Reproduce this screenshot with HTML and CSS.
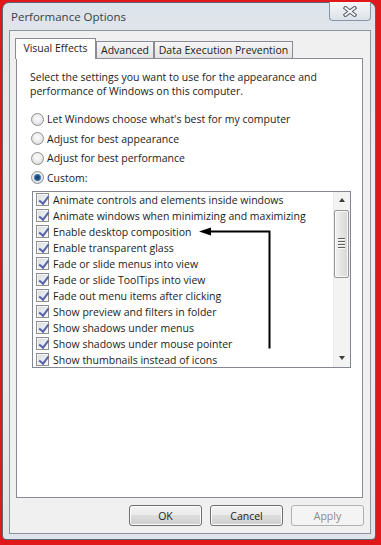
FILE: index.html
```html
<!DOCTYPE html>
<html lang="en">
<head>
    <meta charset="UTF-8">
    <meta name="viewport" content="width=device-width, initial-scale=1.0">
    <title>Performance Options</title>
    <link rel="stylesheet" href="styles.css">
</head>
<body>
    <div class="window">
        <div class="titlebar">
            <span class="title">Performance Options</span>
            <button class="close" aria-label="Close">
                <svg width="14" height="11" viewBox="0 0 14 11">
                    <path d="M2.5 2 L11.5 9 M11.5 2 L2.5 9" stroke="#5c636c" stroke-width="4" stroke-linecap="square"/>
                    <path d="M2.5 2 L11.5 9 M11.5 2 L2.5 9" stroke="#f6f7f8" stroke-width="1.8" stroke-linecap="square"/>
                </svg>
            </button>
        </div>

        <div class="client">
            <div class="tabs">
                <div class="tab tab-active">Visual Effects</div>
                <div class="tab tab-advanced">Advanced</div>
                <div class="tab tab-dep">Data Execution Prevention</div>
            </div>

            <div class="panel">
                <p class="intro">Select the settings you want to use for the appearance and<br>performance of Windows on this computer.</p>

                <ul class="radios">
                    <li><span class="radio"></span>Let Windows choose what's best for my computer</li>
                    <li><span class="radio"></span>Adjust for best appearance</li>
                    <li><span class="radio"></span>Adjust for best performance</li>
                    <li><span class="radio radio-on"></span>Custom:</li>
                </ul>

                <div class="listbox">
                    <ul class="items">
                        <li><span class="check"></span>Animate controls and elements inside windows</li>
                        <li><span class="check"></span>Animate windows when minimizing and maximizing</li>
                        <li><span class="check"></span>Enable desktop composition</li>
                        <li><span class="check"></span>Enable transparent glass</li>
                        <li><span class="check"></span>Fade or slide menus into view</li>
                        <li><span class="check"></span>Fade or slide ToolTips into view</li>
                        <li><span class="check"></span>Fade out menu items after clicking</li>
                        <li><span class="check"></span>Show preview and filters in folder</li>
                        <li><span class="check"></span>Show shadows under menus</li>
                        <li><span class="check"></span>Show shadows under mouse pointer</li>
                        <li><span class="check"></span>Show thumbnails instead of icons</li>
                    </ul>
                    <div class="scrollbar">
                        <div class="sb-btn"><span class="arrow-up"></span></div>
                        <div class="thumb">
                            <span class="grip"></span>
                            <span class="grip"></span>
                            <span class="grip"></span>
                            <span class="grip"></span>
                        </div>
                        <div class="track"></div>
                        <div class="sb-btn"><span class="arrow-down"></span></div>
                    </div>
                </div>
            </div>

            <div class="buttons">
                <button class="btn">OK</button>
                <button class="btn">Cancel</button>
                <button class="btn" disabled>Apply</button>
            </div>
        </div>
    </div>

    <!-- hand drawn annotation over the screenshot -->
    <svg class="annotation" width="381" height="545" viewBox="0 0 381 545">
        <path d="M209 231.5 H269.5 V348.5" fill="none" stroke="#000" stroke-width="2"/>
        <polygon points="199,231.5 211,227.5 211,235.5" fill="#000"/>
    </svg>
</body>
</html>
```

FILE: styles.css
```css
* {
    box-sizing: border-box;
}
body {
    margin: 0;
    height: 545px;
    overflow: hidden;
    position: relative;
    background: #e1181b;
    font-family: "Open Sans", "Noto Sans", Arial, sans-serif;
    font-size: 10.5px;
    color: #1c1c1c;
}
ul {
    list-style: none;
    margin: 0;
    padding: 0;
}
.window {
    margin: 2px 5px 0 2px;
    height: 538px;
    display: flex;
    flex-direction: column;
    padding: 0 4px 5px 6px;
    border: 1px solid #5e6670;
    border-radius: 7px 7px 4px 4px;
    background: linear-gradient(180deg, #dde3ea 0%, #e9edf1 30%, #e7ebef 70%, #dfe4ea 100%);
}
.titlebar {
    height: 27px;
    display: flex;
    justify-content: space-between;
    align-items: flex-start;
}
.title {
    padding: 6px 0 0 2px;
    font-size: 11.5px;
    line-height: 16px;
    color: #3b4047;
}
.close {
    width: 42px;
    height: 19px;
    margin-top: -1px;
    padding: 0;
    border: 1px solid #8a95a3;
    border-top: none;
    border-radius: 0 0 4px 4px;
    background: linear-gradient(#f5f7f9, #dde2e8);
    display: flex;
    align-items: center;
    justify-content: center;
}
.client {
    flex: 1;
    border: 1px solid #8d949c;
    background: #f0f0f0;
    padding: 7px 7px 0 6px;
    display: flex;
    flex-direction: column;
}
.tabs {
    display: flex;
    align-items: flex-start;
    height: 21px;
    margin-bottom: -1px;
    position: relative;
    z-index: 1;
}
.tab {
    height: 17px;
    margin-top: 3px;
    border: 1px solid #898c95;
    border-bottom: none;
    background: linear-gradient(#f5f5f5, #e3e3e3);
    line-height: 16px;
    text-align: center;
    white-space: nowrap;
}
.tab-active {
    width: 81px;
    height: 21px;
    margin-top: 0;
    margin-left: -1px;
    background: #fff;
    line-height: 19px;
}
.tab-advanced {
    width: 58px;
}
.tab-dep {
    width: 139px;
}
.panel {
    width: 347px;
    height: 440px;
    border: 1px solid #898c95;
    background: #fff;
    padding: 11px 13px 0;
}
.intro {
    margin: 0;
    line-height: 14px;
}
.radios {
    margin-top: 11.5px;
}
.radios li {
    height: 19.5px;
    display: flex;
    align-items: center;
    gap: 3px;
    padding-left: 1px;
}
.radio {
    width: 13px;
    height: 13px;
    flex: none;
    border-radius: 50%;
    border: 1px solid #8c8f92;
    background: radial-gradient(circle at 50% 40%, #fdfdfd 0, #ebebeb 50%, #cdcfd1 100%);
}
.radio-on {
    background:
        radial-gradient(circle at 50% 50%, #163a66 0, #1f4f86 2px, #5590c9 3.4px, rgba(255, 255, 255, 0) 4px),
        radial-gradient(circle at 50% 40%, #fdfdfd 0, #ebebeb 50%, #cdcfd1 100%);
}
.listbox {
    margin: 3px 0 0 2px;
    width: 319px;
    height: 177px;
    border: 1px solid #828790;
    display: flex;
}
.items {
    flex: 1;
    overflow: hidden;
}
.items li {
    height: 16px;
    display: flex;
    align-items: center;
    gap: 4px;
    padding-left: 3px;
    white-space: nowrap;
}
.check {
    width: 13px;
    height: 13px;
    flex: none;
    position: relative;
    border: 1px solid #8e8f8f;
    background: linear-gradient(135deg, #d9dbde, #f9f9f9);
    box-shadow: inset 0 0 0 1px #f6f6f6;
}
.check::after {
    content: "";
    position: absolute;
    left: 3.5px;
    top: 0;
    width: 3.5px;
    height: 8px;
    border: solid #5566a8;
    border-width: 0 2px 2px 0;
    transform: rotate(38deg);
}
.scrollbar {
    width: 17px;
    display: flex;
    flex-direction: column;
    background: #f3f3f3;
    border-left: 1px solid #ebebeb;
}
.sb-btn {
    height: 17px;
    flex: none;
    display: flex;
    align-items: center;
    justify-content: center;
}
.arrow-up {
    border: 3.5px solid transparent;
    border-top: none;
    border-bottom: 4px solid #3c3c3c;
}
.arrow-down {
    border: 3.5px solid transparent;
    border-bottom: none;
    border-top: 4px solid #3c3c3c;
}
.thumb {
    height: 68px;
    margin: 1px 1px 0 0;
    flex: none;
    border: 1px solid #959595;
    border-radius: 2px;
    background: linear-gradient(90deg, #f2f2f2, #e4e4e4 50%, #d6d6d6);
    box-shadow: inset 0 0 0 1px #fafafa;
    display: flex;
    flex-direction: column;
    align-items: center;
    justify-content: center;
    gap: 1px;
}
.grip {
    width: 7px;
    height: 1px;
    background: #5e5e5e;
    box-shadow: 0 1px 0 #fbfbfb;
    margin-bottom: 1px;
}
.track {
    flex: 1;
}
.buttons {
    width: 348px;
    margin-top: 7px;
    display: flex;
    justify-content: flex-end;
    gap: 8px;
}
.btn {
    width: 73px;
    height: 21px;
    padding: 0;
    border: 1px solid #707070;
    border-radius: 3px;
    background: linear-gradient(#f2f2f2 0, #ebebeb 50%, #dddddd 50%, #cfcfcf 100%);
    box-shadow: inset 0 0 0 1px #fcfcfc;
    font: inherit;
    color: #1c1c1c;
}
.btn:disabled {
    border-color: #adb2b5;
    background: #f4f4f4;
    box-shadow: none;
    color: #8a8a8a;
}
.annotation {
    position: absolute;
    left: 0;
    top: 0;
    pointer-events: none;
}
```
